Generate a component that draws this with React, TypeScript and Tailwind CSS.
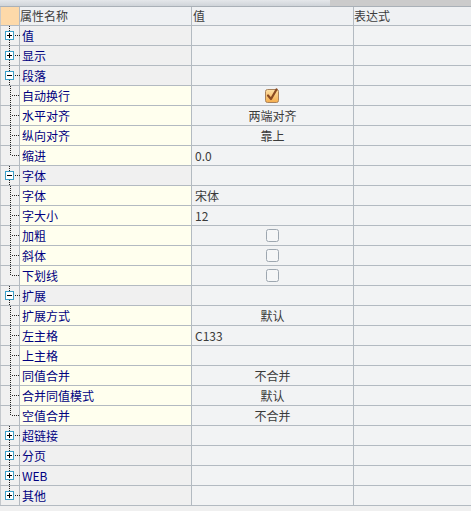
import React from "react";

type Row =
  | { kind: "group"; label: string; expanded: boolean; first?: boolean; last?: boolean }
  | {
      kind: "child";
      label: string;
      value?: string;
      align?: "left" | "center";
      check?: "on" | "off";
      lastChild?: boolean;
    };

const rows: Row[] = [
  { kind: "group", label: "值", expanded: false, first: true },
  { kind: "group", label: "显示", expanded: false },
  { kind: "group", label: "段落", expanded: true },
  { kind: "child", label: "自动换行", check: "on" },
  { kind: "child", label: "水平对齐", value: "两端对齐", align: "center" },
  { kind: "child", label: "纵向对齐", value: "靠上", align: "center" },
  { kind: "child", label: "缩进", value: "0.0", align: "left", lastChild: true },
  { kind: "group", label: "字体", expanded: true },
  { kind: "child", label: "字体", value: "宋体", align: "left" },
  { kind: "child", label: "字大小", value: "12", align: "left" },
  { kind: "child", label: "加粗", check: "off" },
  { kind: "child", label: "斜体", check: "off" },
  { kind: "child", label: "下划线", check: "off", lastChild: true },
  { kind: "group", label: "扩展", expanded: true },
  { kind: "child", label: "扩展方式", value: "默认", align: "center" },
  { kind: "child", label: "左主格", value: "C133", align: "left" },
  { kind: "child", label: "上主格" },
  { kind: "child", label: "同值合并", value: "不合并", align: "center" },
  { kind: "child", label: "合并同值模式", value: "默认", align: "center" },
  { kind: "child", label: "空值合并", value: "不合并", align: "center", lastChild: true },
  { kind: "group", label: "超链接", expanded: false },
  { kind: "group", label: "分页", expanded: false },
  { kind: "group", label: "WEB", expanded: false },
  { kind: "group", label: "其他", expanded: false, last: true },
];

const DOT = "#202020";

function TreeGlyph({ row }: { row: Row }) {
  if (row.kind === "group") {
    return (
      <svg width="19" height="19" viewBox="0 0 19 19" shapeRendering="crispEdges" className="block">
        <line x1="8.5" y1="0" x2="8.5" y2="5" stroke={DOT} strokeDasharray="1 1" />
        {!row.last && (
          <line x1="8.5" y1="14" x2="8.5" y2="19" stroke={DOT} strokeDasharray="1 1" />
        )}
        <line x1="14" y1="9.5" x2="19" y2="9.5" stroke={DOT} strokeDasharray="1 1" />
        <rect x="4.5" y="5.5" width="8" height="8" fill="#ffffff" stroke="#3a9ec8" />
        <line x1="6" y1="9.5" x2="11" y2="9.5" stroke="#000" />
        {!row.expanded && <line x1="8.5" y1="7" x2="8.5" y2="12" stroke="#000" />}
      </svg>
    );
  }
  return (
    <svg width="19" height="19" viewBox="0 0 19 19" shapeRendering="crispEdges" className="block">
      <line
        x1="9.5"
        y1="0"
        x2="9.5"
        y2={row.lastChild ? 10 : 19}
        stroke={DOT}
        strokeDasharray="1 1"
      />
      <line x1="11" y1="9.5" x2="19" y2="9.5" stroke={DOT} strokeDasharray="1 1" />
    </svg>
  );
}

function CheckOn() {
  return (
    <svg width="15" height="15" viewBox="0 0 15 15" className="block">
      <defs>
        <linearGradient id="cg" x1="0" y1="0" x2="0" y2="1">
          <stop offset="0" stopColor="#fde0a6" />
          <stop offset="1" stopColor="#f5ad4c" />
        </linearGradient>
      </defs>
      <rect x="0.5" y="1.5" width="13" height="13" rx="2" fill="url(#cg)" stroke="#a9825c" />
      <path d="M3 7.5 L6 11 L11.5 1.5" fill="none" stroke="#8a4a22" strokeWidth="2.2" strokeLinecap="round" strokeLinejoin="round" />
    </svg>
  );
}

function CheckOff() {
  return (
    <svg width="15" height="15" viewBox="0 0 15 15" className="block">
      <rect x="1.5" y="1.5" width="12" height="12" rx="2" fill="#f5f6f7" stroke="#9ea7b0" />
    </svg>
  );
}

export default function App() {
  const font = { fontFamily: '"Noto Sans CJK SC", "Liberation Sans", sans-serif' };
  return (
    <div className="w-[471px] h-[511px] bg-[#f0f0f0] overflow-hidden text-[12px] leading-none" style={font}>
      {/* top scrollbar strip */}
      <div className="flex h-[7px] border-b border-[#a9b0b7]">
        <div className="w-[330px] bg-gradient-to-b from-[#e4e7ea] to-[#cfd4d9]" />
        <div className="flex-1 bg-[#cbcbcb]" />
      </div>
      {/* header */}
      <div className="flex h-[19px] border-b border-[#b3bac1] bg-[#eff1f3] text-[#3c3c3c]">
        <div className="w-[20px] border-r border-[#b3bac1] bg-[#fdd9a9] border-l border-l-[#c9c9c9]" />
        <div className="w-[172px] border-r border-[#b3bac1] flex items-center pl-[0px]">属性名称</div>
        <div className="w-[162px] border-r border-[#b3bac1] flex items-center pl-[1px]">值</div>
        <div className="flex-1 flex items-center">表达式</div>
      </div>
      {rows.map((r, i) => {
        const isChild = r.kind === "child";
        return (
          <div key={i} className="flex h-[20px] border-b border-[#b3bac1]">
            <div className="w-[20px] border-r border-[#b3bac1] border-l border-l-[#c4c8cc] bg-[#f0f0f0]">
              <TreeGlyph row={r} />
            </div>
            <div
              className={
                "w-[172px] border-r border-[#b3bac1] flex items-center pl-[2px] text-[#000080] " +
                (isChild ? "bg-[#ffffee]" : "bg-[#f0f0f0]")
              }
            >
              {r.label}
            </div>
            <div
              className={
                "w-[162px] border-r border-[#b3bac1] bg-[#f2f3f4] flex items-center text-[#3a3a3a] " +
                (isChild && r.align === "left" ? "pl-[3px]" : "justify-center")
              }
            >
              {isChild && r.check === "on" && <CheckOn />}
              {isChild && r.check === "off" && <CheckOff />}
              {isChild && r.value}
            </div>
            <div className="flex-1 bg-[#f2f3f4]" />
          </div>
        );
      })}
    </div>
  );
}
